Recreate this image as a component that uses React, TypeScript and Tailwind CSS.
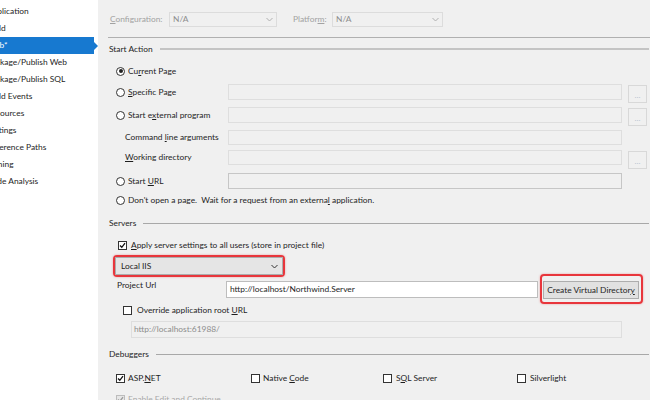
import React from 'react'

const navItems = [
  'Application',
  'Build',
  'Web*',
  'Package/Publish Web',
  'Package/Publish SQL',
  'Build Events',
  'Resources',
  'Settings',
  'Reference Paths',
  'Signing',
  'Code Analysis',
]

const Chevron = ({ color }: { color: string }) => (
  <svg width="7" height="5" viewBox="0 0 7 5" className="shrink-0">
    <path d="M0.5 1 L3.5 4 L6.5 1" fill="none" stroke={color} strokeWidth="1" />
  </svg>
)

const Radio = ({ on }: { on?: boolean }) => (
  <div className="w-[9px] h-[9px] rounded-full border border-[#333] bg-white flex items-center justify-center shrink-0">
    {on && <div className="w-[4px] h-[4px] rounded-full bg-[#222]" />}
  </div>
)

const Check = ({ on, disabled }: { on?: boolean; disabled?: boolean }) => (
  <div
    className={
      'w-[9px] h-[9px] border flex items-center justify-center shrink-0 ' +
      (disabled ? 'border-[#bcbcbc] bg-[#e6e6e6]' : 'border-[#333] bg-white')
    }
  >
    {on && (
      <svg width="7" height="7" viewBox="0 0 7 7">
        <path d="M1 3.5 L2.8 5.3 L6 1.2" fill="none" stroke={disabled ? '#9a9a9a' : '#111'} strokeWidth="1.3" />
      </svg>
    )}
  </div>
)

const Dots = () => (
  <div className="ml-[6px] mt-[1px] w-[19px] h-[18px] border border-[#d8d8d8] bg-[#f0f0f0] flex items-end justify-center pb-[3px] text-[#b8c4d0] leading-none self-start">
    ...
  </div>
)

const Heading = ({ label, thick }: { label: string; thick?: boolean }) => (
  <div className="flex items-center h-[14px]">
    <span className="text-[#1e1e1e] ml-[1px]">{label}</span>
    <div className={'flex-1 ml-[7px] mr-[1px] ' + (thick ? 'h-[2px] bg-[#c4c4c4]' : 'h-px bg-[#a8a8a8]')} />
  </div>
)

export default function App() {
  return (
    <div className="flex w-[650px] h-[400px] overflow-hidden bg-[#f0f0f0] font-['Lato','Noto_Sans',sans-serif] text-[8.4px] text-[#1e1e1e]">
      {/* left nav */}
      <div className="w-[98px] shrink-0 bg-white pt-[3px]">
        {navItems.map((item) =>
          item === 'Web*' ? (
            <div key={item} className="flex items-center h-[17px]">
              <div className="w-[94px] h-full bg-[#1779d0] text-white flex items-center">
                <span className="ml-[-13px] whitespace-nowrap">{item}</span>
              </div>
              <svg width="4" height="8" viewBox="0 0 4 8">
                <path d="M0 0 L4 4 L0 8 Z" fill="#1779d0" />
              </svg>
            </div>
          ) : (
            <div key={item} className="flex items-center h-[17px]">
              <span className="ml-[-13px] whitespace-nowrap">{item}</span>
            </div>
          )
        )}
      </div>

      {/* settings */}
      <div className="flex-1 flex flex-col pl-[10px] *:shrink-0">
        <div className="flex items-center h-[15px] mt-[12px] text-[#a2a2a2]">
          <span className="ml-[2px] w-[59px]">
            <u>C</u>onfiguration:
          </span>
          <div className="w-[108px] h-full border border-[#dcdcdc] flex items-center justify-between px-[3px]">
            <span className="text-[#8e8e8e]">N/A</span>
            <Chevron color="#b0b0b0" />
          </div>
          <span className="ml-[16px] w-[39px]">
            Platfor<u>m</u>:
          </span>
          <div className="w-[111px] h-full border border-[#dcdcdc] flex items-center justify-between px-[3px]">
            <span className="text-[#8e8e8e]">N/A</span>
            <Chevron color="#b0b0b0" />
          </div>
        </div>

        <div className="mt-[10px] h-px bg-[#b0b0b0]" />

        <div className="mt-[4px]">
          <Heading label="Start Action" thick />
        </div>

        <div className="flex items-center h-[14px] mt-[8px] ml-[8px]">
          <Radio on />
          <span className="ml-[3px]">
            Cu<u>r</u>rent Page
          </span>
        </div>

        <div className="flex items-start h-[18px] mt-[6px] ml-[8px]">
          <div className="flex items-center h-[16px]">
            <Radio />
            <span className="ml-[3px] w-[100px]">
              <u>S</u>pecific Page
            </span>
          </div>
          <div className="w-[394px] h-[16px] border border-[#dedede]" />
          <Dots />
        </div>

        <div className="flex items-start h-[16px] mt-[5px] ml-[8px]">
          <div className="flex items-center h-[16px]">
            <Radio />
            <span className="ml-[3px] w-[100px] whitespace-nowrap">
              Start e<u>x</u>ternal program
            </span>
          </div>
          <div className="w-[394px] h-[16px] border border-[#dedede]" />
          <Dots />
        </div>

        <div className="flex items-center h-[15px] mt-[7px] ml-[17px]">
          <span className="w-[103px] whitespace-nowrap">
            Command <u>l</u>ine arguments
          </span>
          <div className="w-[394px] h-[15px] border border-[#dedede]" />
        </div>

        <div className="flex items-start h-[16px] mt-[5px] ml-[17px]">
          <span className="w-[103px] h-[15px] flex items-center whitespace-nowrap">
            <span>
              <u>W</u>orking directory
            </span>
          </span>
          <div className="w-[394px] h-[15px] border border-[#dedede]" />
          <Dots />
        </div>

        <div className="flex items-center h-[16px] mt-[7px] ml-[8px]">
          <Radio />
          <span className="ml-[3px] w-[100px]">
            Start <u>U</u>RL
          </span>
          <div className="w-[394px] h-[16px] border border-[#c6c6c6]" />
        </div>

        <div className="flex items-center h-[13px] mt-[5px] ml-[8px]">
          <Radio />
          <span className="ml-[3px] whitespace-pre">
            Don't open a page.  Wait for a request from an externa<u>l</u> application.
          </span>
        </div>

        <div className="mt-[9px]">
          <Heading label="Servers" />
        </div>

        <div className="flex items-center h-[14px] mt-[8px] ml-[10px]">
          <Check on />
          <span className="ml-[4px]">
            <u>A</u>pply server settings to all users (store in project file)
          </span>
        </div>

        <div className="mt-[3px] ml-[5px] w-[172px] h-[22px] border-2 border-[#e8363c] rounded-[4px] shadow-[0_0_2px_rgba(232,54,60,0.5)]">
          <div className="w-full h-full border border-[#acacac] bg-[#e5e5e5] flex items-center justify-between pl-[5px] pr-[4px]">
            <span>Local IIS</span>
            <Chevron color="#333" />
          </div>
        </div>

        <div className="flex items-start h-[18px] mt-[4px] ml-[9px]">
          <span className="w-[109px] -mt-[2px]">Project Url</span>
          <div className="w-[312px] h-[17px] border border-[#bdbdbd] bg-white flex items-center pl-[3px]">
            http://localhost/Northwind.Server
          </div>
          <div className="ml-[2px] -mt-[7px] -mb-[5px] border-2 border-[#e8363c] rounded-[4px] pt-[5px] pb-[3px] pl-[1px] pr-[2px] shadow-[0_0_2px_rgba(232,54,60,0.5)]">
            <div className="w-[96px] h-[18px] border border-[#adadad] bg-[#e1e1e1] flex items-center justify-center whitespace-nowrap overflow-hidden">
              Create Virtual Director<u>y</u>
            </div>
          </div>
        </div>

        <div className="flex items-center h-[12px] mt-[5px] ml-[15px]">
          <Check />
          <span className="ml-[5px]">
            Override application root <u>U</u>RL
          </span>
        </div>

        <div className="mt-[5px] ml-[23px] w-[491px] h-[17px] border border-[#dedede] flex items-center pl-[2px] text-[#8d8d8d]">
          http://localhost:61988/
        </div>

        <div className="mt-[9px]">
          <Heading label="Debuggers" />
        </div>

        <div className="grid grid-cols-[135px_132px_134px_1fr] h-[14px] mt-[10px] ml-[8px]">
          <div className="flex items-center">
            <Check on />
            <span className="ml-[3px]">
              ASP.<u>N</u>ET
            </span>
          </div>
          <div className="flex items-center">
            <Check />
            <span className="ml-[3px]">
              Native <u>C</u>ode
            </span>
          </div>
          <div className="flex items-center">
            <Check />
            <span className="ml-[4px]">
              S<u>Q</u>L Server
            </span>
          </div>
          <div className="flex items-center">
            <Check />
            <span className="ml-[4px]">
              Silverli<u>g</u>ht
            </span>
          </div>
        </div>

        <div className="flex items-center h-[14px] mt-[7px] ml-[8px] text-[#a8a8a8]">
          <Check on disabled />
          <span className="ml-[3px]">Enable Edit and Continue</span>
        </div>
      </div>
    </div>
  )
}
